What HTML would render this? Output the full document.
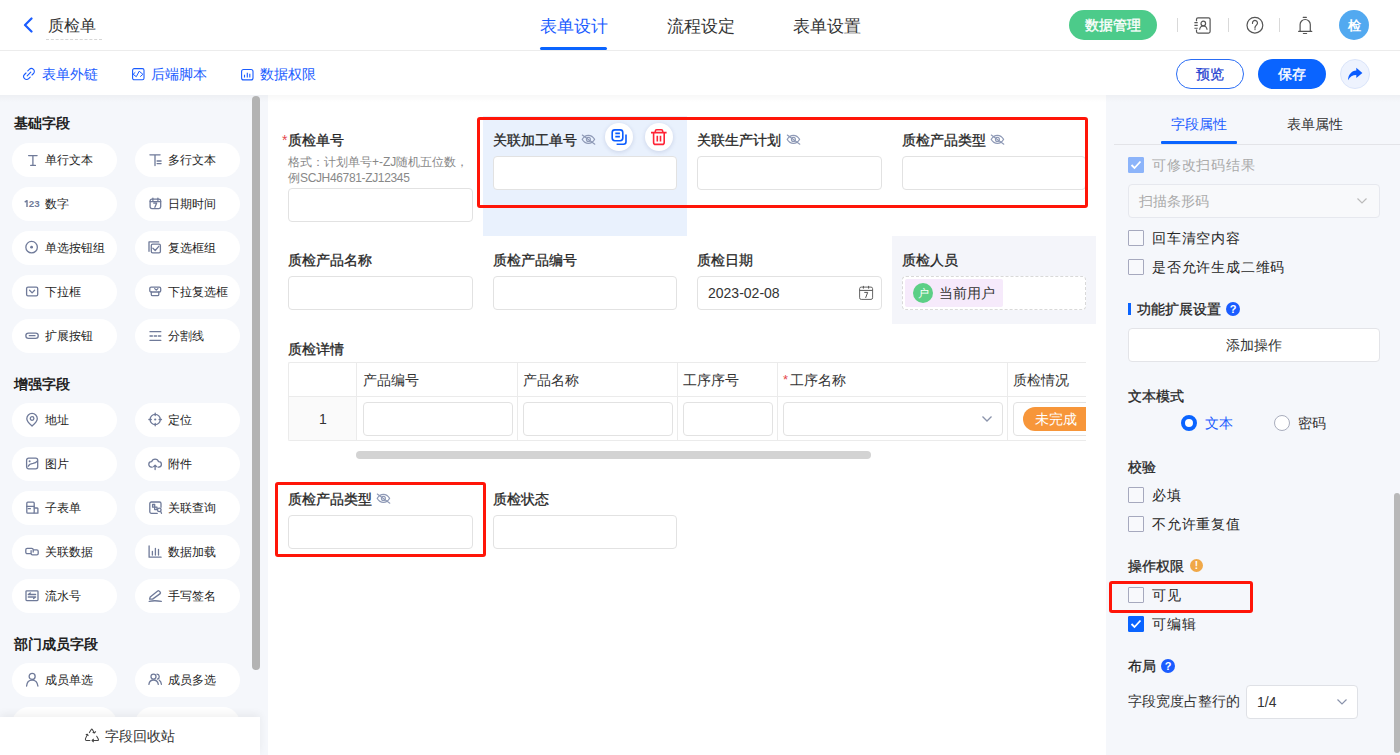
<!DOCTYPE html>
<html><head><meta charset="utf-8">
<style>
*{box-sizing:border-box;margin:0;padding:0}
html,body{width:1400px;height:755px;overflow:hidden}
body{position:relative;font-family:"Liberation Sans",sans-serif;color:#333;background:#fff;font-size:14px}
.a{position:absolute}
.t{position:absolute;white-space:nowrap;line-height:1}
.blue{color:#1a5cff}
.sep{position:absolute;width:1px;height:14px;top:18px;background:#d9d9d9}
.pill{position:absolute;width:105px;height:34px;border-radius:17px;background:#fff}
.pill .ic{position:absolute;left:13px;top:10px;width:15px;height:15px;overflow:visible}
.pill span{position:absolute;left:33px;top:11px;font-size:12px;line-height:12px;color:#1e1e1e;white-space:nowrap}
.sh{position:absolute;left:14px;font-size:14px;font-weight:bold;color:#222;line-height:14px}
.lbl{position:absolute;font-size:14px;font-weight:normal;-webkit-text-stroke:0.3px #262626;color:#262626;line-height:14px;white-space:nowrap}
.inp{position:absolute;height:34px;border:1px solid #e2e2e2;border-radius:4px;background:#fff}
.cb{position:absolute;left:1128px;width:16px;height:16px;border:1px solid #a6a9be;border-radius:1px;background:#f8f9fc}
.rt{position:absolute;left:1152px;font-size:14px;line-height:14px;color:#262626;white-space:nowrap;letter-spacing:0.8px}
.rh{position:absolute;left:1128px;font-size:14px;line-height:14px;font-weight:normal;-webkit-text-stroke:0.3px #262626;color:#262626;white-space:nowrap}
.red{position:absolute;border:3px solid #ff1508;border-radius:3px}
.th{position:absolute;top:363px;height:33px;font-size:14px;line-height:14px;color:#333}
</style></head><body>

<!-- HEADER -->
<svg class="a" style="left:22px;top:17px" width="12" height="16" viewBox="0 0 12 16"><path d="M9.5 1.5 L3 8 L9.5 14.5" fill="none" stroke="#1a5cff" stroke-width="2.2" stroke-linecap="round" stroke-linejoin="round"/></svg>
<div class="t" style="left:48px;top:18px;font-size:16px;color:#333">质检单</div>
<div class="a" style="left:46px;top:39px;width:56px;border-top:1px dashed #d6d6d6"></div>

<div class="t blue" style="left:540px;top:18px;font-size:16.5px">表单设计</div>
<div class="a" style="left:540px;top:47px;width:67px;height:3px;border-radius:2px;background:#0a64ff"></div>
<div class="t" style="left:667px;top:18px;font-size:16.5px;color:#333">流程设定</div>
<div class="t" style="left:793px;top:18px;font-size:16.5px;color:#333">表单设置</div>

<div class="a" style="left:1069px;top:10px;width:88px;height:30px;border-radius:15px;background:#4ccb8a;color:#fff;font-size:14px;line-height:30px;text-align:center;-webkit-text-stroke:0.35px #fff">数据管理</div>
<div class="sep" style="left:1177px"></div>
<div class="sep" style="left:1228px"></div>
<div class="sep" style="left:1279px"></div>
<!-- contacts icon -->
<svg class="a" style="left:1193px;top:16px" width="19" height="19" viewBox="0 0 19 19"><path d="M3.5 5.2V3.3A1.5 1.5 0 0 1 5 1.8H15.6A1.5 1.5 0 0 1 17.1 3.3V15.6A1.5 1.5 0 0 1 15.6 17.1H5A1.5 1.5 0 0 1 3.5 15.6V13.6" fill="none" stroke="#555" stroke-width="1.2"/><path d="M1.4 6.6H4.7M1.4 9.4H4.7M1.4 12.2H4.7" stroke="#555" stroke-width="1.1"/><circle cx="10.3" cy="7.5" r="2.3" fill="none" stroke="#555" stroke-width="1.2"/><path d="M6.6 13.8C6.9 11.4 8.3 10 10.3 10C12.3 10 13.8 11.4 14.1 13.8" fill="none" stroke="#555" stroke-width="1.2"/></svg>
<!-- help icon -->
<svg class="a" style="left:1245px;top:16px" width="20" height="19" viewBox="0 0 20 19"><circle cx="9.9" cy="9.2" r="7.9" fill="none" stroke="#555" stroke-width="1.2"/><path d="M7.5 7.3A2.5 2.5 0 1 1 11.8 8.7C11.1 9.6 10 10.2 10 11.6V12.2" fill="none" stroke="#555" stroke-width="1.2" stroke-linecap="round"/><circle cx="10" cy="13.6" r="0.7" fill="#555"/></svg>
<!-- bell -->
<svg class="a" style="left:1297px;top:16px" width="16" height="19" viewBox="0 0 16 19"><path d="M6.2 1.3H9.4M6.4 17.5H9.6" stroke="#555" stroke-width="1.2" stroke-linecap="round"/><path d="M3.1 15V8.6A5 5 0 0 1 13.3 8.6V15" fill="none" stroke="#555" stroke-width="1.2"/><path d="M1.6 15.3H14.8" stroke="#555" stroke-width="1.2" stroke-linecap="round"/></svg>
<div class="a" style="left:1339px;top:10px;width:30px;height:30px;border-radius:15px;background:#52a9f0;color:#fff;font-size:13px;line-height:32px;text-align:center;font-weight:bold">检</div>

<div class="a" style="left:0;top:50px;width:1400px;height:1px;background:#ececec"></div>

<!-- TOOLBAR -->
<svg class="a" style="left:22px;top:67px" width="14" height="14" viewBox="0 0 14 14"><path d="M5.8 3.8L7.3 2.4a2.9 2.9 0 0 1 4.2 4.1L10 8M8.2 10.2L6.7 11.6a2.9 2.9 0 0 1-4.2-4.1L4 6M5.2 8.8L8.8 5.2" fill="none" stroke="#1a5cff" stroke-width="1.1" stroke-linecap="round"/></svg>
<div class="t blue" style="left:42px;top:67px;font-size:14px">表单外链</div>
<svg class="a" style="left:132px;top:68px" width="13" height="13" viewBox="0 0 13 13"><rect x="0.6" y="0.6" width="11.4" height="11.2" rx="1.6" fill="none" stroke="#1a5cff" stroke-width="1.1"/><path d="M3.3 4.3L1.1 6.3 4.3 8.7 7.2 3.2 10.9 6.3 8.2 8.7" fill="none" stroke="#1a5cff" stroke-width="1"/></svg>
<div class="t blue" style="left:151px;top:67px;font-size:14px">后端脚本</div>
<svg class="a" style="left:241px;top:68px" width="13" height="13" viewBox="0 0 13 13"><rect x="0.6" y="1.5" width="11.4" height="10.4" rx="2" fill="none" stroke="#1a5cff" stroke-width="1.1"/><path d="M3.5 6.8v2.8M6.3 4.8v4.8M8.8 5.8v3.8" stroke="#1a5cff" stroke-width="1.1"/></svg>
<div class="t blue" style="left:260px;top:67px;font-size:14px">数据权限</div>

<div class="a" style="left:1176px;top:59px;width:68px;height:30px;border-radius:15px;border:1px solid #2a6df5;background:#fff;color:#1f3fd0;font-size:14px;line-height:28px;text-align:center;-webkit-text-stroke:0.25px #1f3fd0">预览</div>
<div class="a" style="left:1258px;top:59px;width:68px;height:30px;border-radius:15px;background:#0a64ff;color:#fff;font-size:14px;line-height:30px;text-align:center;-webkit-text-stroke:0.4px #fff">保存</div>
<div class="a" style="left:1340px;top:59px;width:30px;height:30px;border-radius:15px;background:#eef3fe;border:1px solid #dbe5fa"></div>
<svg class="a" style="left:1347px;top:66px" width="16" height="16" viewBox="0 0 16 16"><path d="M1 14.2C1.3 8.8 4.5 4.9 9.3 4.6V1.8L15.4 6.9L9.3 12V8.9C5.6 8.9 2.8 10.6 1 14.2Z" fill="#0a5cff"/></svg>

<!-- CONTENT BACKGROUNDS -->
<div class="a" style="left:0;top:95px;width:268px;height:660px;background:#f5f7fb"></div>
<div class="a" style="left:268px;top:95px;width:838px;height:660px;background:#fff"></div>
<div class="a" style="left:1106px;top:95px;width:294px;height:660px;background:#f5f7fb"></div>
<div class="a" style="left:0;top:95px;width:1400px;height:7px;background:linear-gradient(rgba(0,0,0,0.03),rgba(0,0,0,0))"></div>

<!-- SIDEBAR -->
<div class="a" style="left:252px;top:96px;width:8px;height:574px;border-radius:4px;background:#b3b3b3"></div>
<div class="sh" style="top:116px">基础字段</div>
<div class="pill" style="left:12px;top:143px"><svg class="ic" width="15" height="15" viewBox="0 0 15 15"><path d="M3.6 2.6H12.1M7.9 2.6V12.4M5.7 12.4H10.4" fill="none" stroke="#6f7a99" stroke-width="1.3" stroke-linecap="round" stroke-linejoin="round"/></svg><span>单行文本</span></div>
<div class="pill" style="left:135px;top:143px"><svg class="ic" width="15" height="15" viewBox="0 0 15 15"><path d="M1.9 1.8H12.1M7 1.8V12.5M9.1 8H13.1M9.1 10.6H13.1" fill="none" stroke="#6f7a99" stroke-width="1.3" stroke-linecap="round" stroke-linejoin="round"/></svg><span>多行文本</span></div>
<div class="pill" style="left:12px;top:187px"><svg class="ic" width="15" height="15" viewBox="0 0 15 15"><path d="M-0.3 5.1L2 3.7V10" fill="none" stroke="#6f7a99" stroke-width="1.45" stroke-linejoin="round"/><text x="3.7" y="10" font-size="9.8" font-weight="bold" fill="#6f7a99" font-family="Liberation Sans">23</text></svg><span>数字</span></div>
<div class="pill" style="left:135px;top:187px"><svg class="ic" width="15" height="15" viewBox="0 0 15 15"><rect x="2.1" y="2.2" width="10.6" height="9.4" rx="1.8" fill="none" stroke="#6f7a99" stroke-width="1.3" stroke-linecap="round" stroke-linejoin="round"/><path d="M2.1 4.6H12.7M4.9 1.2V3.4M9.9 1.2V3.4M5.7 6.1H8.7L6.9 10.3" fill="none" stroke="#6f7a99" stroke-width="1.3" stroke-linecap="round" stroke-linejoin="round"/></svg><span>日期时间</span></div>
<div class="pill" style="left:12px;top:231px"><svg class="ic" width="15" height="15" viewBox="0 0 15 15"><circle cx="6.6" cy="6.2" r="5.75" fill="none" stroke="#6f7a99" stroke-width="1.3" stroke-linecap="round" stroke-linejoin="round"/><circle cx="6.6" cy="6.2" r="1.4" fill="#6f7a99"/></svg><span>单选按钮组</span></div>
<div class="pill" style="left:135px;top:231px"><svg class="ic" width="15" height="15" viewBox="0 0 15 15"><path d="M1 10.3V0.9H10.7" fill="none" stroke="#6f7a99" stroke-width="1.3" stroke-linecap="round" stroke-linejoin="round"/><rect x="3.3" y="3.2" width="9.1" height="8.7" rx="1.4" fill="none" stroke="#6f7a99" stroke-width="1.3" stroke-linecap="round" stroke-linejoin="round"/><path d="M4.9 7.3L7.2 9.5L10.8 5.3" fill="none" stroke="#6f7a99" stroke-width="1.3" stroke-linecap="round" stroke-linejoin="round"/></svg><span>复选框组</span></div>
<div class="pill" style="left:12px;top:275px"><svg class="ic" width="15" height="15" viewBox="0 0 15 15"><rect x="1.6" y="2.2" width="11.1" height="8.6" rx="1.4" fill="none" stroke="#6f7a99" stroke-width="1.3" stroke-linecap="round" stroke-linejoin="round"/><path d="M4.6 5.3L7.1 7.9L9.6 5.3" fill="none" stroke="#6f7a99" stroke-width="1.3" stroke-linecap="round" stroke-linejoin="round"/></svg><span>下拉框</span></div>
<div class="pill" style="left:135px;top:275px"><svg class="ic" width="15" height="15" viewBox="0 0 15 15"><rect x="1.8" y="2.2" width="10.9" height="4.8" rx="1.3" fill="none" stroke="#6f7a99" stroke-width="1.3" stroke-linecap="round" stroke-linejoin="round"/><path d="M3.3 7V9.5A1.2 1.2 0 0 0 4.5 10.7H9.6A1.2 1.2 0 0 0 10.8 9.5V7M6.7 3.6L8.3 5.1L9.9 3.6" fill="none" stroke="#6f7a99" stroke-width="1.3" stroke-linecap="round" stroke-linejoin="round"/></svg><span>下拉复选框</span></div>
<div class="pill" style="left:12px;top:319px"><svg class="ic" width="15" height="15" viewBox="0 0 15 15"><rect x="0.85" y="4.05" width="12.4" height="5.3" rx="2.65" fill="none" stroke="#6f7a99" stroke-width="1.3" stroke-linecap="round" stroke-linejoin="round"/><path d="M4.3 6.7H10" fill="none" stroke="#6f7a99" stroke-width="1.3" stroke-linecap="round" stroke-linejoin="round"/></svg><span>扩展按钮</span></div>
<div class="pill" style="left:135px;top:319px"><svg class="ic" width="15" height="15" viewBox="0 0 15 15"><path d="M2 2.7H12.8M2 7H4.4M6.2 7H8.6M10.4 7H12.8M2 11.4H12.8" fill="none" stroke="#6f7a99" stroke-width="1.3" stroke-linecap="round" stroke-linejoin="round"/></svg><span>分割线</span></div>
<div class="pill" style="left:12px;top:403px"><svg class="ic" width="15" height="15" viewBox="0 0 15 15"><path d="M7.05 13.1C4 10.3 1.8 8 1.8 5.7A5.25 5.25 0 0 1 12.3 5.7C12.3 8 10.1 10.3 7.05 13.1Z" fill="none" stroke="#6f7a99" stroke-width="1.3" stroke-linecap="round" stroke-linejoin="round"/><circle cx="7.1" cy="5.5" r="1.8" fill="none" stroke="#6f7a99" stroke-width="1.3" stroke-linecap="round" stroke-linejoin="round"/></svg><span>地址</span></div>
<div class="pill" style="left:135px;top:403px"><svg class="ic" width="15" height="15" viewBox="0 0 15 15"><circle cx="7.2" cy="6.5" r="5.1" fill="none" stroke="#6f7a99" stroke-width="1.3" stroke-linecap="round" stroke-linejoin="round"/><path d="M7.2 0.2V2.6M7.2 10.4V12.8M0.9 6.5H3.3M11.1 6.5H13.5" fill="none" stroke="#6f7a99" stroke-width="1.3" stroke-linecap="round" stroke-linejoin="round"/><circle cx="7.2" cy="6.5" r="1.1" fill="#6f7a99"/></svg><span>定位</span></div>
<div class="pill" style="left:12px;top:447px"><svg class="ic" width="15" height="15" viewBox="0 0 15 15"><rect x="1.6" y="1.2" width="11.1" height="10.6" rx="2" fill="none" stroke="#6f7a99" stroke-width="1.3" stroke-linecap="round" stroke-linejoin="round"/><path d="M3.2 9.3C4.2 7.2 5.6 6.6 8 6.3C10 6 11.3 5.3 12 4.3" fill="none" stroke="#6f7a99" stroke-width="1.3" stroke-linecap="round" stroke-linejoin="round"/><circle cx="4.6" cy="4.3" r="1" fill="#6f7a99"/></svg><span>图片</span></div>
<div class="pill" style="left:135px;top:447px"><svg class="ic" width="15" height="15" viewBox="0 0 15 15"><path d="M4.3 10.1H3.4A2.7 2.7 0 0 1 3.6 4.7A3.7 3.7 0 0 1 10.6 4.7A2.7 2.7 0 0 1 10.8 10.1H10M7.1 12.6V8.1M5.6 9.6L7.1 8.1L8.6 9.6" fill="none" stroke="#6f7a99" stroke-width="1.3" stroke-linecap="round" stroke-linejoin="round"/></svg><span>附件</span></div>
<div class="pill" style="left:12px;top:491px"><svg class="ic" width="15" height="15" viewBox="0 0 15 15"><rect x="1.8" y="1.2" width="7.4" height="11" rx="1" fill="none" stroke="#6f7a99" stroke-width="1.3" stroke-linecap="round" stroke-linejoin="round"/><path d="M1.8 5.3H9.2M3.2 7.7H5.4M9.2 7H12.3A0.6 0.6 0 0 1 12.9 7.6V12.2H9.2" fill="none" stroke="#6f7a99" stroke-width="1.3" stroke-linecap="round" stroke-linejoin="round"/></svg><span>子表单</span></div>
<div class="pill" style="left:135px;top:491px"><svg class="ic" width="15" height="15" viewBox="0 0 15 15"><path d="M9.3 12.3H3.4A1.6 1.6 0 0 1 1.8 10.7V2.6A1.6 1.6 0 0 1 3.4 1H11.4A1.6 1.6 0 0 1 13 2.6V6.3" fill="none" stroke="#6f7a99" stroke-width="1.3" stroke-linecap="round" stroke-linejoin="round"/><rect x="4.6" y="3.5" width="2.1" height="2.7" fill="none" stroke="#6f7a99" stroke-width="1.3" stroke-linecap="round" stroke-linejoin="round"/><rect x="6.7" y="6.2" width="2.3" height="2.4" fill="none" stroke="#6f7a99" stroke-width="1.3" stroke-linecap="round" stroke-linejoin="round"/><circle cx="11.3" cy="8.9" r="1.8" fill="none" stroke="#6f7a99" stroke-width="1.3" stroke-linecap="round" stroke-linejoin="round"/><path d="M12.5 10.3L13.5 12.3" fill="none" stroke="#6f7a99" stroke-width="1.3" stroke-linecap="round" stroke-linejoin="round"/></svg><span>关联查询</span></div>
<div class="pill" style="left:12px;top:535px"><svg class="ic" width="15" height="15" viewBox="0 0 15 15"><path d="M6 8.6H2.2A1.4 1.4 0 0 1 0.8 7.2V4.7A1.4 1.4 0 0 1 2.2 3.3H6.8A1.4 1.4 0 0 1 8.2 4.7V7M6.1 5.6V8.5A1.4 1.4 0 0 0 7.5 9.9H11.8A1.4 1.4 0 0 0 13.2 8.5V6.3A1.4 1.4 0 0 0 11.8 4.9H9" fill="none" stroke="#6f7a99" stroke-width="1.3" stroke-linecap="round" stroke-linejoin="round"/></svg><span>关联数据</span></div>
<div class="pill" style="left:135px;top:535px"><svg class="ic" width="15" height="15" viewBox="0 0 15 15"><path d="M1.1 0.9V12.2H13.1M4.4 6.3V10.1M7.4 3.3V10.1M10.5 4.3V10.1" fill="none" stroke="#6f7a99" stroke-width="1.3" stroke-linecap="round" stroke-linejoin="round"/></svg><span>数据加载</span></div>
<div class="pill" style="left:12px;top:579px"><svg class="ic" width="15" height="15" viewBox="0 0 15 15"><rect x="1" y="1.8" width="12" height="9.8" rx="0.8" fill="none" stroke="#6f7a99" stroke-width="1.3" stroke-linecap="round" stroke-linejoin="round"/><path d="M3.3 5.5H10.6M3.3 5.5L5.3 4M3.3 8H10.6L8.6 9.5" fill="none" stroke="#6f7a99" stroke-width="1.3" stroke-linecap="round" stroke-linejoin="round"/></svg><span>流水号</span></div>
<div class="pill" style="left:135px;top:579px"><svg class="ic" width="15" height="15" viewBox="0 0 15 15"><path d="M1.6 10.2L2.2 8L9.7 1.9A1 1 0 0 1 11 2L12.3 3.3A1 1 0 0 1 12.2 4.6L4.6 10.1Z" fill="none" stroke="#6f7a99" stroke-width="1.3" stroke-linecap="round" stroke-linejoin="round"/><path d="M1.2 12.3C4.5 11.6 9 11.6 13.3 12.3" fill="none" stroke="#6f7a99" stroke-width="1.3" stroke-linecap="round" stroke-linejoin="round"/></svg><span>手写签名</span></div>
<div class="pill" style="left:12px;top:663px"><svg class="ic" width="15" height="15" viewBox="0 0 15 15"><circle cx="7.15" cy="3.4" r="3" fill="none" stroke="#6f7a99" stroke-width="1.3" stroke-linecap="round" stroke-linejoin="round"/><path d="M1.6 13C1.9 9.6 4.1 7.1 7.15 7.1C10.2 7.1 12.4 9.6 12.9 13" fill="none" stroke="#6f7a99" stroke-width="1.3" stroke-linecap="round" stroke-linejoin="round"/></svg><span>成员单选</span></div>
<div class="pill" style="left:135px;top:663px"><svg class="ic" width="15" height="15" viewBox="0 0 15 15"><circle cx="5.5" cy="3.6" r="2.5" fill="none" stroke="#6f7a99" stroke-width="1.3" stroke-linecap="round" stroke-linejoin="round"/><path d="M0.9 11.3C1.3 8.6 3.1 7 5.5 7C7.9 7 9.8 8.6 10.3 11.3M9 1.2A2.5 2.5 0 0 1 9.4 6.1M11.3 7.2C12.5 8 13.2 9.4 13.4 11.3" fill="none" stroke="#6f7a99" stroke-width="1.3" stroke-linecap="round" stroke-linejoin="round"/></svg><span>成员多选</span></div>
<div class="pill" style="left:12px;top:707px"><span></span></div>
<div class="pill" style="left:135px;top:707px"><span></span></div>
<div class="sh" style="top:377px">增强字段</div>
<div class="sh" style="top:637px">部门成员字段</div>


<div class="a" style="left:0;top:717px;width:260px;height:38px;background:#fff;box-shadow:0 -3px 8px rgba(0,0,0,0.06)"></div>
<svg class="a" style="left:84px;top:728px;overflow:visible" width="16" height="16" viewBox="0 0 16 16"><path d="M5.4 4.6L7.3 1.4Q7.8 0.8 8.3 1.4L10.3 4.7M11.6 3.7L10.5 5L9 4.6M3.3 6.6L1.5 10.6Q1.1 12.5 2.6 12.5H5.9M2.1 6.5L3.5 6.2L4.1 7.6M8.1 12.5H13.4Q14.9 12.5 14.3 11L12.7 8.3M9.5 11.2L8.1 12.5L9.5 13.8" fill="none" stroke="#444" stroke-width="1.05" stroke-linecap="round" stroke-linejoin="round"/></svg>
<div class="t" style="left:105px;top:729px;font-size:14px;color:#333">字段回收站</div>

<!-- CANVAS -->
<div class="a" style="left:483px;top:116px;width:204px;height:120px;background:#e9f1fd"></div>
<div class="a" style="left:892px;top:236px;width:204px;height:88px;background:#f4f5fa"></div>

<div class="t" style="left:282px;top:133px;font-size:14px;color:#e5484d">*</div>
<div class="lbl" style="left:288px;top:133px">质检单号</div>
<div class="t" style="left:288px;top:154px;font-size:12px;line-height:16px;color:#888">格式：计划单号+-ZJ随机五位数，<br>例<span style="letter-spacing:-0.35px">SCJH46781-ZJ12345</span></div>
<div class="inp" style="left:288px;top:188px;width:185px"></div>

<div class="lbl" style="left:493px;top:133px">关联加工单号</div>
<svg class="a" style="left:581px;top:134px" width="15" height="11" viewBox="0 0 15 11"><path d="M1.2 5.4C2.8 2.7 5 1.4 7.4 1.4S12 2.7 13.6 5.4C12 8.1 9.8 9.4 7.4 9.4S2.8 8.1 1.2 5.4Z" fill="none" stroke="#8e99b6" stroke-width="1.1"/><circle cx="7.4" cy="5.4" r="2" fill="none" stroke="#8e99b6" stroke-width="1.1"/><path d="M1.3 1L13.8 10.2" stroke="#8e99b6" stroke-width="1.1" stroke-linecap="round"/></svg>
<div class="inp" style="left:493px;top:156px;width:184px"></div>
<div class="a" style="left:605px;top:123px;width:28px;height:28px;border-radius:14px;background:#fff;box-shadow:0 1px 4px rgba(60,80,140,0.18)"></div>
<svg class="a" style="left:611px;top:129px" width="17" height="17" viewBox="0 0 17 17"><rect x="1.2" y="0.9" width="10.6" height="10.8" rx="2.6" fill="none" stroke="#0a5cff" stroke-width="1.6"/><path d="M4.3 4.4h4.6M4.3 7.6h4.6" stroke="#0a5cff" stroke-width="1.6"/><path d="M15 5.6v7.1a2.5 2.5 0 0 1-2.5 2.5H5.6" fill="none" stroke="#0a5cff" stroke-width="1.6"/></svg>
<div class="a" style="left:645px;top:123px;width:28px;height:28px;border-radius:14px;background:#fff;box-shadow:0 1px 4px rgba(60,80,140,0.18)"></div>
<svg class="a" style="left:651px;top:129px" width="17" height="17" viewBox="0 0 17 17"><path d="M0 3.6h15.6M4.3 3.4V2.2a1.4 1.4 0 0 1 1.4-1.4h4.6a1.4 1.4 0 0 1 1.4 1.4v1.2M2.6 4.4v9a2 2 0 0 0 2 2h6.6a2 2 0 0 0 2-2v-9M6.3 6.7v5.8M9.5 6.7v5.8" fill="none" stroke="#ff2235" stroke-width="1.6"/></svg>

<div class="lbl" style="left:697px;top:133px">关联生产计划</div>
<svg class="a" style="left:786px;top:134px" width="15" height="11" viewBox="0 0 15 11"><path d="M1.2 5.4C2.8 2.7 5 1.4 7.4 1.4S12 2.7 13.6 5.4C12 8.1 9.8 9.4 7.4 9.4S2.8 8.1 1.2 5.4Z" fill="none" stroke="#8e99b6" stroke-width="1.1"/><circle cx="7.4" cy="5.4" r="2" fill="none" stroke="#8e99b6" stroke-width="1.1"/><path d="M1.3 1L13.8 10.2" stroke="#8e99b6" stroke-width="1.1" stroke-linecap="round"/></svg>
<div class="inp" style="left:697px;top:156px;width:185px"></div>

<div class="lbl" style="left:902px;top:133px">质检产品类型</div>
<svg class="a" style="left:990px;top:134px" width="15" height="11" viewBox="0 0 15 11"><path d="M1.2 5.4C2.8 2.7 5 1.4 7.4 1.4S12 2.7 13.6 5.4C12 8.1 9.8 9.4 7.4 9.4S2.8 8.1 1.2 5.4Z" fill="none" stroke="#8e99b6" stroke-width="1.1"/><circle cx="7.4" cy="5.4" r="2" fill="none" stroke="#8e99b6" stroke-width="1.1"/><path d="M1.3 1L13.8 10.2" stroke="#8e99b6" stroke-width="1.1" stroke-linecap="round"/></svg>
<div class="inp" style="left:902px;top:156px;width:184px"></div>

<div class="lbl" style="left:288px;top:253px">质检产品名称</div>
<div class="inp" style="left:288px;top:276px;width:185px"></div>
<div class="lbl" style="left:493px;top:253px">质检产品编号</div>
<div class="inp" style="left:493px;top:276px;width:184px"></div>
<div class="lbl" style="left:697px;top:253px">质检日期</div>
<div class="inp" style="left:697px;top:276px;width:185px"></div>
<div class="t" style="left:708px;top:286px;font-size:14px;color:#333">2023-02-08</div>
<svg class="a" style="left:858px;top:285px" width="16" height="16" viewBox="0 0 16 16"><rect x="1.6" y="2.1" width="13" height="12.3" rx="1.6" fill="none" stroke="#666" stroke-width="1"/><path d="M1.6 5.4H14.6M5.4 0.9V3.6M10.6 0.9V3.6M6.3 7.4H9.7L7.6 12.9" fill="none" stroke="#555" stroke-width="1"/></svg>
<div class="lbl" style="left:902px;top:253px">质检人员</div>
<div class="a" style="left:902px;top:276px;width:184px;height:34px;border:1px dashed #d9d9d9;border-radius:4px;background:#fff"></div>
<div class="a" style="left:905px;top:279px;width:98px;height:28px;border-radius:2px;background:#f6eafb"></div>
<div class="a" style="left:913px;top:283px;width:20px;height:20px;border-radius:10px;background:#5ccf86;color:#fff;font-size:11px;line-height:20px;text-align:center">户</div>
<div class="t" style="left:939px;top:286px;font-size:14px;color:#333">当前用户</div>

<div class="lbl" style="left:288px;top:342px">质检详情</div>
<div class="a" style="left:288px;top:362px;width:798px;height:79px;border:1px solid #ebebeb;border-right:none;border-radius:2px 0 0 2px;overflow:hidden">
  <div class="a" style="left:0;top:34px;width:67px;height:44px;background:#fafafa"></div>
  <div class="a" style="left:0;top:33px;width:798px;height:1px;background:#ebebeb"></div>
  <div class="a" style="left:67px;top:0;width:1px;height:78px;background:#ebebeb"></div>
  <div class="a" style="left:228px;top:0;width:1px;height:78px;background:#ebebeb"></div>
  <div class="a" style="left:388px;top:0;width:1px;height:78px;background:#ebebeb"></div>
  <div class="a" style="left:488px;top:0;width:1px;height:78px;background:#ebebeb"></div>
  <div class="a" style="left:718px;top:0;width:1px;height:78px;background:#ebebeb"></div>
  <div class="t" style="left:74px;top:10px;font-size:14px;color:#333">产品编号</div>
  <div class="t" style="left:234px;top:10px;font-size:14px;color:#333">产品名称</div>
  <div class="t" style="left:394px;top:10px;font-size:14px;color:#333">工序序号</div>
  <div class="t" style="left:494px;top:10px;font-size:13px;color:#e5484d">*</div>
  <div class="t" style="left:501px;top:10px;font-size:14px;color:#333">工序名称</div>
  <div class="t" style="left:724px;top:10px;font-size:14px;color:#333">质检情况</div>
  <div class="t" style="left:30px;top:49px;font-size:14px;color:#333">1</div>
  <div class="inp" style="left:74px;top:39px;width:150px"></div>
  <div class="inp" style="left:234px;top:39px;width:150px"></div>
  <div class="inp" style="left:394px;top:39px;width:90px"></div>
  <div class="inp" style="left:494px;top:39px;width:220px"></div>
  <svg class="a" style="left:692px;top:52px" width="12" height="8" viewBox="0 0 12 8"><path d="M1.5 1.5l4.5 4.5 4.5-4.5" fill="none" stroke="#8a93ab" stroke-width="1.3"/></svg>
  <div class="inp" style="left:724px;top:39px;width:150px"></div>
  <div class="a" style="left:734px;top:44px;width:76px;height:24px;border-radius:12px;background:#f7963a;color:#fff;font-size:14px;line-height:24px;padding-left:12px">未完成</div>
</div>
<div class="a" style="left:356px;top:451px;width:515px;height:8px;border-radius:4px;background:#d3d3d3"></div>

<div class="lbl" style="left:288px;top:492px">质检产品类型</div>
<svg class="a" style="left:376px;top:493px" width="15" height="11" viewBox="0 0 15 11"><path d="M1.2 5.4C2.8 2.7 5 1.4 7.4 1.4S12 2.7 13.6 5.4C12 8.1 9.8 9.4 7.4 9.4S2.8 8.1 1.2 5.4Z" fill="none" stroke="#8e99b6" stroke-width="1.1"/><circle cx="7.4" cy="5.4" r="2" fill="none" stroke="#8e99b6" stroke-width="1.1"/><path d="M1.3 1L13.8 10.2" stroke="#8e99b6" stroke-width="1.1" stroke-linecap="round"/></svg>
<div class="inp" style="left:288px;top:515px;width:185px"></div>
<div class="lbl" style="left:493px;top:492px">质检状态</div>
<div class="inp" style="left:493px;top:515px;width:184px"></div>

<!-- RED ANNOTATIONS -->
<div class="red" style="left:477px;top:117px;width:611px;height:91px"></div>
<div class="red" style="left:275px;top:482px;width:211px;height:75px"></div>
<div class="red" style="left:1109px;top:581px;width:144px;height:32px"></div>

<!-- RIGHT PANEL -->
<div class="t blue" style="left:1171px;top:117px;font-size:14px">字段属性</div>
<div class="t" style="left:1287px;top:117px;font-size:14px;color:#333">表单属性</div>
<div class="a" style="left:1114px;top:144px;width:286px;height:1px;background:#e3e4e8"></div>
<div class="a" style="left:1161px;top:141px;width:76px;height:3px;border-radius:1px;background:#0a64ff"></div>

<div class="cb" style="top:157px;background:#8cb4fa;border-color:#8cb4fa"></div>
<svg class="a" style="left:1130px;top:160px" width="12" height="10" viewBox="0 0 12 10"><path d="M1.5 5l3 3 6-6.5" fill="none" stroke="#fff" stroke-width="1.8"/></svg>
<div class="rt" style="top:158px;color:#aaa">可修改扫码结果</div>
<div class="a" style="left:1128px;top:184px;width:252px;height:34px;border:1px solid #e6e8ee;border-radius:4px;background:#f8f9fb"></div>
<div class="t" style="left:1139px;top:194px;font-size:14px;color:#aaa">扫描条形码</div>
<svg class="a" style="left:1356px;top:197px" width="12" height="8" viewBox="0 0 12 8"><path d="M1.5 1.5l4.5 4.5 4.5-4.5" fill="none" stroke="#bbb" stroke-width="1.2"/></svg>

<div class="cb" style="top:230px"></div>
<div class="rt" style="top:231px">回车清空内容</div>
<div class="cb" style="top:259px"></div>
<div class="rt" style="top:260px">是否允许生成二维码</div>

<div class="a" style="left:1128px;top:303px;width:3px;height:12px;background:#0a64ff"></div>
<div class="lbl" style="left:1137px;top:302px">功能扩展设置</div>
<div class="a" style="left:1226px;top:302px;width:14px;height:14px;border-radius:7px;background:#1a5cff;color:#fff;font-size:11px;line-height:14px;text-align:center;font-weight:bold">?</div>
<div class="a" style="left:1128px;top:328px;width:252px;height:34px;border:1px solid #e3e4e8;border-radius:4px;background:#fff;font-size:14px;line-height:32px;text-align:center;color:#333">添加操作</div>

<div class="rh" style="top:389px">文本模式</div>
<div class="a" style="left:1181px;top:415px;width:16px;height:16px;border-radius:8px;border:4.5px solid #0a64ff;background:#fff"></div>
<div class="t blue" style="left:1205px;top:416px;font-size:14px">文本</div>
<div class="a" style="left:1274px;top:415px;width:16px;height:16px;border-radius:8px;border:1px solid #a9adbd;background:#fff"></div>
<div class="t" style="left:1298px;top:416px;font-size:14px;color:#333">密码</div>

<div class="rh" style="top:460px">校验</div>
<div class="cb" style="top:487px"></div>
<div class="rt" style="top:488px">必填</div>
<div class="cb" style="top:516px"></div>
<div class="rt" style="top:517px">不允许重复值</div>

<div class="rh" style="top:559px">操作权限</div>
<div class="a" style="left:1190px;top:559px;width:13px;height:13px;border-radius:7px;background:#f0a848;color:#fff;font-size:10px;line-height:13px;text-align:center;font-weight:bold">!</div>
<div class="cb" style="top:587px"></div>
<div class="rt" style="top:588px">可见</div>
<div class="cb" style="top:616px;background:#0a64ff;border-color:#0a64ff"></div>
<svg class="a" style="left:1130px;top:619px" width="12" height="10" viewBox="0 0 12 10"><path d="M1.5 5l3 3 6-6.5" fill="none" stroke="#fff" stroke-width="1.8"/></svg>
<div class="rt" style="top:617px">可编辑</div>

<div class="rh" style="top:659px">布局</div>
<div class="a" style="left:1161px;top:659px;width:14px;height:14px;border-radius:7px;background:#1a5cff;color:#fff;font-size:11px;line-height:14px;text-align:center;font-weight:bold">?</div>
<div class="t" style="left:1128px;top:694px;font-size:14px;color:#333">字段宽度占整行的</div>
<div class="a" style="left:1246px;top:685px;width:112px;height:34px;border:1px solid #dfe1e6;border-radius:4px;background:#fff"></div>
<div class="t" style="left:1257px;top:695px;font-size:14px;color:#333">1/4</div>
<svg class="a" style="left:1336px;top:698px" width="12" height="8" viewBox="0 0 12 8"><path d="M1.5 1.5l4.5 4.5 4.5-4.5" fill="none" stroke="#8a93ab" stroke-width="1.2"/></svg>
<div class="a" style="left:1394px;top:493px;width:6px;height:260px;border-radius:3px;background:#b8b8b8"></div>

</body></html>
